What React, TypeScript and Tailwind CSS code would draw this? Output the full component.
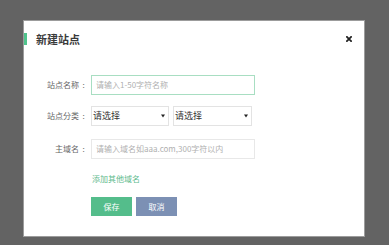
import React from 'react';

const font = { fontFamily: '"Noto Sans CJK SC", "Noto Sans", sans-serif' };

const Label = ({ text }: { text: string }) => (
  <div className="w-[64px] shrink-0 flex justify-end items-center text-[8px] leading-[10px] text-[#666]">
    <span>{text}</span>
    <span className="w-[9px] text-center">:</span>
  </div>
);

const FakeSelect = ({ width }: { width: string }) => (
  <div className={`${width} h-[20px] border border-[#e3e3e3] flex items-center pl-[1px] pr-[3px]`}>
    <span className="text-[9px] leading-[10px] text-[#333]">请选择</span>
    <svg className="ml-auto w-[4px] h-[4px]" viewBox="0 0 4 4">
      <path d="M0 0.5 H4 L2 3.5 Z" fill="#222" />
    </svg>
  </div>
);

export default function App() {
  return (
    <div className="w-[389px] h-[245px] bg-[#636363] pt-[20px] pl-[23px]" style={font}>
      <div className="w-[342px] h-[217px] bg-white border border-[#9c9c9c] flex flex-col">
        {/* header */}
        <div className="flex items-center h-[12px] mt-[12px]">
          <div className="w-[3px] h-[12px] bg-[#4fc38c]" />
          <div className="ml-[9px] text-[11px] leading-[12px] font-bold text-[#3a3a3a]">新建站点</div>
          <svg className="ml-auto mr-[12px] w-[6px] h-[6px]" viewBox="0 0 10 10">
            <path d="M1.5 1.5 L8.5 8.5 M8.5 1.5 L1.5 8.5" stroke="#222" strokeWidth={3} strokeLinecap="square" />
          </svg>
        </div>

        {/* name */}
        <div className="flex items-center mt-[30px]">
          <Label text="站点名称" />
          <div className="ml-[3px] w-[164px] h-[20px] border border-[#a8dec2] flex items-center pl-[4px]">
            <span className="text-[8px] leading-[10px] text-[#b0b0b0]">请输入1-50字符名称</span>
          </div>
        </div>

        {/* category */}
        <div className="flex items-center mt-[11px]">
          <Label text="站点分类" />
          <div className="ml-[3px] flex gap-[4px]">
            <FakeSelect width="w-[78px]" />
            <FakeSelect width="w-[79px]" />
          </div>
        </div>

        {/* domain */}
        <div className="flex items-center mt-[13px]">
          <Label text="主域名" />
          <div className="ml-[3px] w-[164px] h-[20px] border border-[#e8e8e8] flex items-center pl-[4px]">
            <span className="text-[8px] leading-[10px] text-[#b0b0b0]">请输入域名如aaa.com,300字符以内</span>
          </div>
        </div>

        <div className="ml-[68px] mt-[14px] text-[8px] leading-[11px] text-[#5dba8c]">添加其他域名</div>

        <div className="ml-[67px] mt-[13px] flex gap-[4px]">
          <button className="w-[41px] h-[19px] bg-[#54bd8b] text-white text-[8px] leading-[10px]">保存</button>
          <button className="w-[41px] h-[19px] bg-[#7c90b4] text-white text-[8px] leading-[10px]">取消</button>
        </div>
      </div>
    </div>
  );
}
